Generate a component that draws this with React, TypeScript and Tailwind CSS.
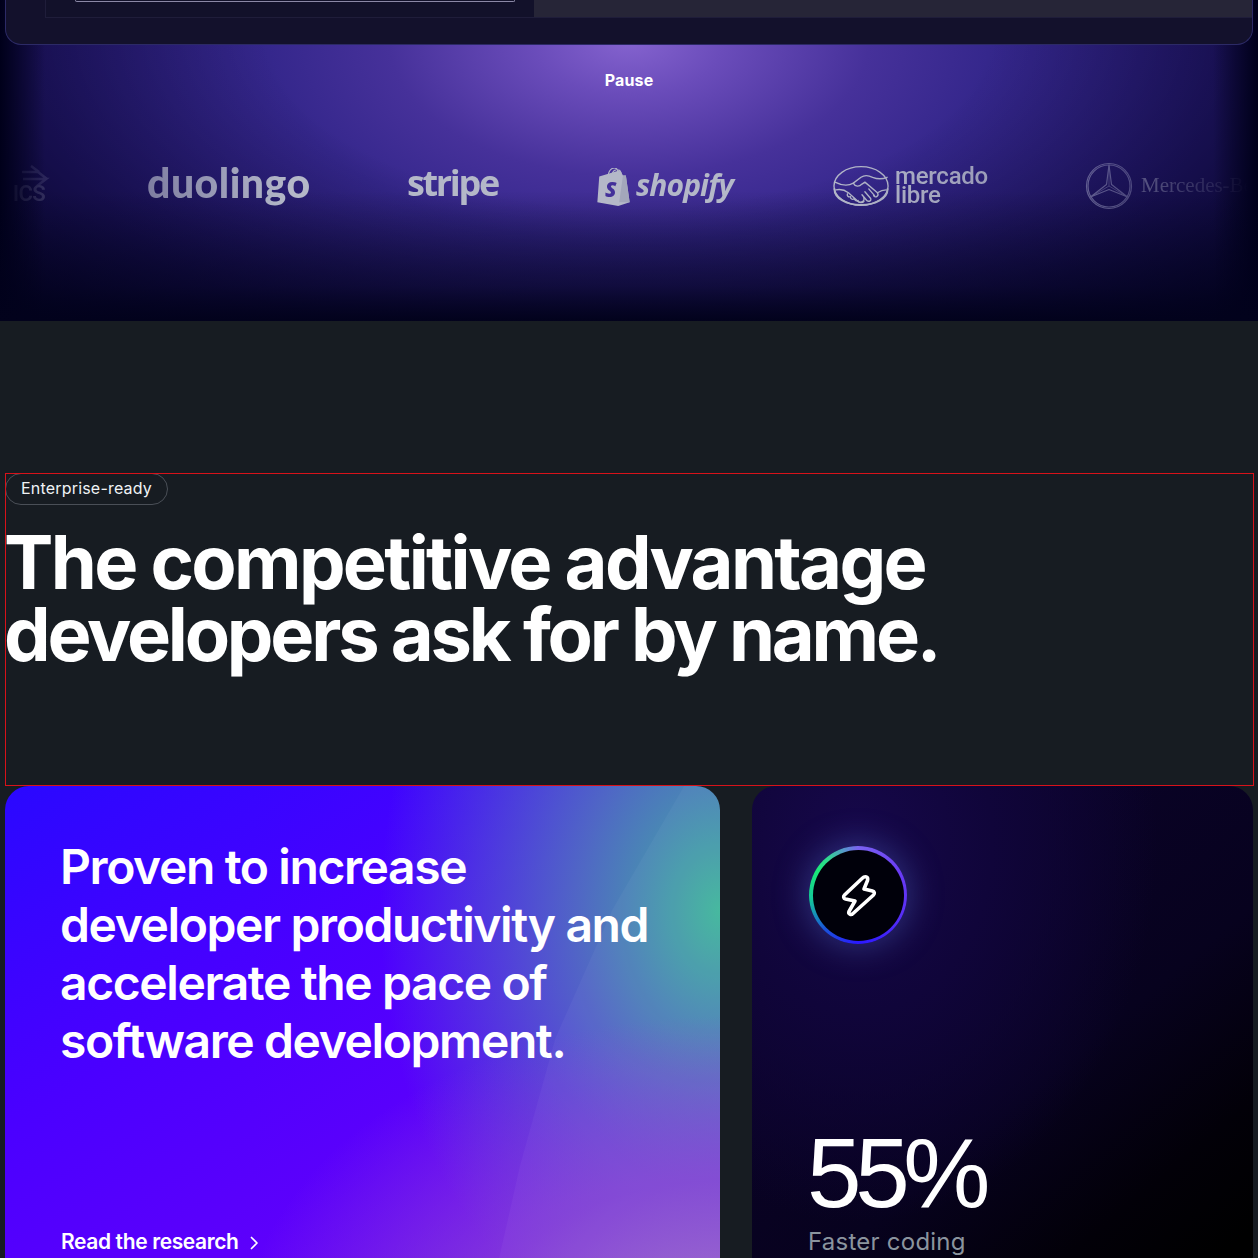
import React from "react";

const sans = "font-['Inter','Liberation_Sans',sans-serif]";

function Bolt() {
  return (
    <svg width="44" height="50" viewBox="0 0 44 50" fill="none" className="-ml-[1px]" aria-hidden="true">
      <path
        d="M26 8.5 C29 5.5 32.5 6.5 31.5 10.5 L28 19 L36.5 21 C38.5 21.5 39 23.5 37.5 25 L17 43.5 C15 45.5 12 44 13 41.5 L19 31 L9.5 29 C7.5 28.5 7 26.5 8.5 25 Z"
        stroke="#fff"
        strokeWidth="3.6"
        strokeLinejoin="round"
        strokeLinecap="round"
      />
    </svg>
  );
}

function Handshake() {
  return (
    <svg width="58" height="42" viewBox="0 0 58 42" fill="none" stroke="#b4b8c8" strokeWidth="1.4" strokeLinecap="round" strokeLinejoin="round" aria-hidden="true">
      <ellipse cx="29" cy="21" rx="28" ry="20" />
      <path d="M1.5 24 C1.5 34 14 40.5 29 40.5 C44 40.5 56.5 34 56.5 24" strokeWidth="2" />
      <path d="M2 17 C10 21 16 21 21 18 L29 12 C33 9 37 10 41 12 C46 14 51 14 56 12" />
      <path d="M3 25 C8 24 12 25 16 28 L26 37 C29 39 33 37 32 33" />
      <path d="M21 18 C23 22 27 22 30 19 L33 17 L46 28 C48 31 44 34 42 31" />
      <path d="M37 24 L43 31 M33 27 L39 34 C40 37 36 38 34 35 M30 30 L35 36 M32 37 C30 39 27 38 26 37" />
      <path d="M46 28 C49 26 52 25 55 25" />
      <path d="M15 29 C14 31 16 33 18 32 C18 34 20 36 22 34 C22 36 25 37 26 36" />
    </svg>
  );
}

function Star() {
  return (
    <svg width="48" height="48" viewBox="0 0 48 48" fill="none" stroke="#8f8fb5" strokeWidth="1.2" strokeLinejoin="round" aria-hidden="true">
      <circle cx="24" cy="24" r="22.5" />
      <circle cx="24" cy="24" r="21" />
      <path d="M24 3 L26.5 22.5 L42.5 35 L24 27.5 L5.5 35 L21.5 22.5 Z" />
      <path d="M24 3 V24 L42.5 35 M24 24 L5.5 35" strokeWidth="0.7" />
    </svg>
  );
}

function Bag() {
  return (
    <svg width="33" height="38" viewBox="0 0 34 40" aria-hidden="true">
      <path d="M2 9 L22 3 C24 3 25 4 26 6 L27 8 L30 8 L34 36 L22 40 L0 36 Z" fill="#b4b8c8" />
      <path d="M11 9 C12 3 15 0 18 0 C21 0 22 3 22 7 M15 8 C16 4 18 2 20 2 M21 2 C24 2 25 4 25 7" stroke="#b4b8c8" strokeWidth="1.2" fill="none" />
      <path d="M23 36 L27 8 L30 8 L34 36 Z" fill="#a3a7bb" />
      <text x="8" y="30" fontFamily="'Open Sans',sans-serif" fontWeight="800" fontStyle="italic" fontSize="22" fill="#43309a">S</text>
    </svg>
  );
}

function Arrows() {
  return (
    <svg width="30" height="22" viewBox="0 0 30 22" fill="none" stroke="#8a8aaa" strokeWidth="2.6" aria-hidden="true">
      <path d="M2 7 H18 M11 1 L19 7 M3 14 H26 L17 21 M18 7 L27 14" />
    </svg>
  );
}

function LogoRow() {
  return (
    <div className="mt-[64px] flex h-[60px] items-center gap-[97px] overflow-hidden text-[#b4b8c8] [mask-image:linear-gradient(90deg,rgba(0,0,0,0)_0px,rgba(0,0,0,0.65)_147px,#000_290px,#000_830px,rgba(0,0,0,0.75)_1050px,transparent_1250px)]">
      <div className="flex w-[50px] shrink-0 flex-col items-end overflow-hidden">
        <Arrows />
        <span className="-mt-[3px] mr-[5px] text-[22px] leading-[20px] font-semibold tracking-[-0.03em] whitespace-nowrap font-['Roboto',sans-serif]">ICS</span>
      </div>
      <span className="-mt-[4px] w-[163px] shrink-0 text-[41px] leading-none font-black font-['Lato',sans-serif] tracking-[0.012em]">duolingo</span>
      <span className="-mt-[3px] w-[91px] shrink-0 text-[36px] leading-none font-bold font-['Open_Sans',sans-serif] tracking-[-0.065em]">stripe</span>
      <div className="mt-[6px] ml-[2px] flex w-[139px] shrink-0 items-center gap-[6px]">
        <Bag />
        <span className="-mt-[4px] text-[30px] leading-none font-bold italic font-['Open_Sans',sans-serif] tracking-[-0.03em] [font-variant-ligatures:none]">shopify</span>
      </div>
      <div className="mt-[4px] flex w-[155px] shrink-0 items-center gap-[6px]">
        <Handshake />
        <span className="text-[24px] leading-[19px] font-medium tracking-[-0.01em] font-['Roboto',sans-serif]">mercado<br />libre</span>
      </div>
      <div className="mt-[4px] flex shrink-0 items-center gap-[8px]">
        <Star />
        <span className="text-[21px] whitespace-nowrap font-['Liberation_Serif',serif]">Mercedes-Benz</span>
      </div>
    </div>
  );
}

export default function App() {
  return (
    <div className={`h-[1258px] overflow-hidden bg-[#171c22] ${sans}`}>
      <section className="h-[321px] overflow-hidden bg-[linear-gradient(0deg,#02021c_0px,rgba(2,2,28,0.55)_35px,rgba(2,2,28,0)_130px),linear-gradient(90deg,#00001a_0px,rgba(0,0,26,0)_45px,rgba(0,0,26,0)_1213px,#00001a_1258px),radial-gradient(ellipse_860px_420px_at_50%_30px,rgba(0,0,26,0)_42%,rgba(0,0,26,0.5)_74%,rgba(0,0,26,0.95)_100%),radial-gradient(ellipse_600px_340px_at_50%_40px,#8563cf_0%,#6a4cba_16%,#46319a_40%,#35278c_60%,#2a1c7c_100%)]">
        <div className="mx-[5px] flex h-[45px] items-start rounded-b-[16px] border-x border-b border-[#2c2a66] bg-[#13112c] pl-[39px]">
          <div className="flex h-[18px] w-full border-b border-l border-[#1f1d3a]">
            <div className="flex w-[488px] shrink-0 bg-[#12112a] pl-[29px]">
              <div className="h-[2px] w-[440px] rounded-b-[2px] border-x border-b border-[#8b88a6]" />
            </div>
            <div className="flex-1 bg-[#262537]" />
          </div>
        </div>
        <div className="pt-[25px] text-center text-[16px] leading-[20px] font-bold tracking-[0.01em] text-white">Pause</div>
        <LogoRow />
      </section>

      <section className="px-[5px] pt-[152px]">
        <div className="-mr-[1px] h-[313px] outline outline-1 -outline-offset-1 outline-[#d8121a]">
          <span className="inline-block rounded-full border border-[#4a4f57] px-[15px] pt-[4px] pb-[6px] text-[16px] leading-[20px] font-normal tracking-[0.012em] text-[#f0f3f6]">Enterprise-ready</span>
          <h2 className="mt-[21px] -ml-[1px] text-[74px] leading-[72px] font-bold text-white">
            <span className="tracking-[-0.036em]">The competitive advantage</span>
            <br />
            <span className="tracking-[-0.043em]">developers ask for by name.</span>
          </h2>
        </div>
        <div className="flex gap-[32px]">
          <article className="relative flex h-[560px] w-[715px] shrink-0 flex-col overflow-hidden rounded-[24px] bg-[radial-gradient(ellipse_480px_330px_at_100%_100%,#a074c6_0%,rgba(140,70,210,0.75)_50%,rgba(100,0,250,0)_100%),radial-gradient(ellipse_340px_460px_at_100%_125px,#40b69c_0%,rgba(80,125,185,0.82)_42%,rgba(90,60,220,0)_100%),linear-gradient(150deg,#2a08ff_0%,#4a00ff_35%,#6200fa_70%,#6a10ee_100%)] p-[56px]">
            <div className="absolute inset-0 bg-white/[0.035] [clip-path:polygon(95%_0,100%_0,100%_100%,68%_100%,69%_85%,72%_68%,77%_45%,85%_22%)]" />
            <h3 className="relative -mt-[4px] -ml-[1px] text-[48px] leading-[58px] font-semibold tracking-[-0.029em] text-white">
              Proven to increase
              <br />
              developer productivity and
              <br />
              accelerate the pace of
              <br />
              software development.
            </h3>
            <a className="relative mt-[159px] flex items-center gap-[7px] text-[21px] leading-[26px] font-semibold tracking-[-0.018em] text-white">
              Read the research
              <svg width="16" height="16" viewBox="0 0 16 16" fill="none" stroke="#fff" strokeWidth="1.7" strokeLinecap="round" strokeLinejoin="round" className="mt-[2px]" aria-hidden="true">
                <path d="M5.5 2.5 L11 8 L5.5 13.5" />
              </svg>
            </a>
          </article>
          <article className="flex h-[560px] flex-1 flex-col items-start rounded-[24px] bg-[radial-gradient(ellipse_300px_380px_at_21%_10%,#16084a_0%,#10053a_45%,rgba(8,2,32,0)_100%),linear-gradient(140deg,#0d0330_0%,#07021e_55%,#020008_75%,#000000_88%)] px-[56px] pt-[60px]">
            <div className="ml-[1px] flex h-[98px] w-[98px] items-center justify-center rounded-full bg-[conic-gradient(from_0deg,#7a63f0_0deg,#6a3cf5_60deg,#5a30f5_110deg,#2a18ff_180deg,#1a55d8_225deg,#14c89a_265deg,#1ae878_300deg,#30d890_320deg,#5a90d0_345deg,#7a63f0_360deg)] shadow-[0_0_36px_rgba(90,120,220,0.45)]">
              <div className="flex h-[91px] w-[91px] items-center justify-center rounded-full bg-[#00000a]">
                <Bolt />
              </div>
            </div>
            <div className="mt-[181px] -ml-[1px] text-[98px] leading-[96px] font-normal tracking-[-0.065em] text-white font-['Liberation_Sans',sans-serif]">55%</div>
            <div className="mt-[5px] text-[24px] leading-[32px] font-normal tracking-[0.01em] text-[#8b949e]">Faster coding</div>
          </article>
        </div>
      </section>
    </div>
  );
}
